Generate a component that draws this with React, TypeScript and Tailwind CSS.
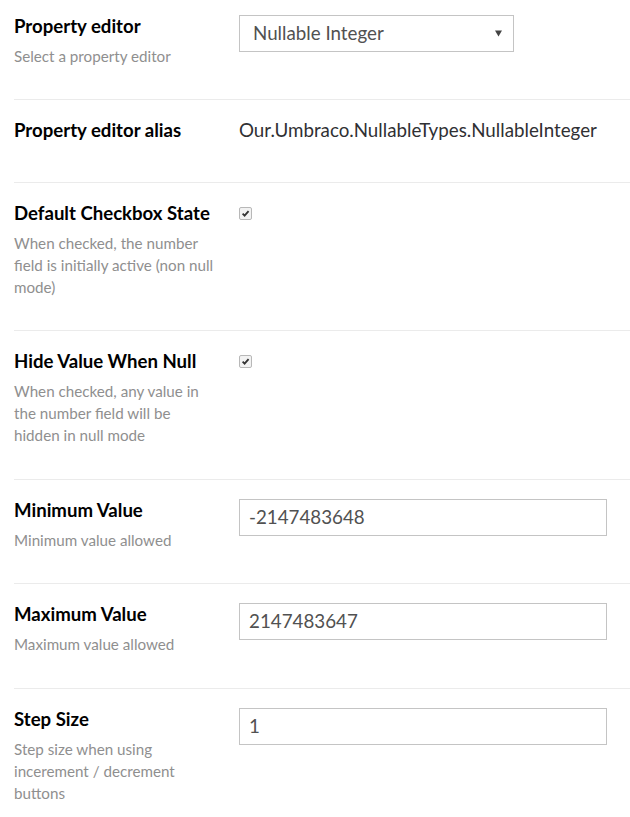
import React from 'react';

type Row = {
  label: string;
  desc?: string;
  control: React.ReactNode;
  pb: string;
};

function Check() {
  return (
    <span className="mt-[6px] flex h-[13px] w-[13px] items-center justify-center rounded-[2px] border border-[#b8b8b8] bg-[#f2f2f2]">
      <svg viewBox="0 0 10 10" className="h-[9px] w-[9px]">
        <path d="M1.8 5.2 L4 7.4 L8.4 2.4" fill="none" stroke="#333" strokeWidth="2" />
      </svg>
    </span>
  );
}

function TextInput({ value }: { value: string }) {
  return (
    <div className="mt-[1px] flex h-[37px] w-[368px] items-center border border-[#c4c4c4] px-[9px] text-[18.75px] text-[#515151]">
      {value}
    </div>
  );
}

export default function App() {
  const rows: Row[] = [
    {
      label: 'Property editor',
      desc: 'Select a property editor',
      pb: 'pb-[32px]',
      control: (
        <div className="mt-[1px] flex h-[37px] w-[275px] items-center justify-between border border-[#c4c4c4] pl-[13px] pr-[11px] text-[18.75px] text-[#515151]">
          <span>Nullable Integer</span>
          <svg viewBox="0 0 8 7" className="h-[7px] w-[7px]">
            <path d="M0 0 H8 L4 7 Z" fill="#444" />
          </svg>
        </div>
      ),
    },
    {
      label: 'Property editor alias',
      pb: 'pb-[40px]',
      control: <div className="text-[18.75px] leading-[24px] text-[#303033]">Our.Umbraco.NullableTypes.NullableInteger</div>,
    },
    {
      label: 'Default Checkbox State',
      desc: 'When checked, the number field is initially active (non null mode)',
      pb: 'pb-[32px]',
      control: <Check />,
    },
    {
      label: 'Hide Value When Null',
      desc: 'When checked, any value in the number field will be hidden in null mode',
      pb: 'pb-[33px]',
      control: <Check />,
    },
    { label: 'Minimum Value', desc: 'Minimum value allowed', pb: 'pb-[32px]', control: <TextInput value="-2147483648" /> },
    { label: 'Maximum Value', desc: 'Maximum value allowed', pb: 'pb-[33px]', control: <TextInput value="2147483647" /> },
    {
      label: 'Step Size',
      desc: 'Step size when using incerement / decrement buttons',
      pb: 'pb-[32px]',
      control: <TextInput value="1" />,
    },
  ];

  return (
    <div className="min-h-[817px] w-[630px] bg-white pl-[14px] font-['Lato',sans-serif]">
      {rows.map((r, i) => (
        <div
          key={i}
          className={`flex border-[#ebebeb] ${i < rows.length - 1 ? 'border-b' : ''} ${
            i === 0 ? 'pt-[14px]' : 'pt-[18px]'
          } ${r.pb}`}
        >
          <div className="w-[225px] shrink-0 pr-[22px]">
            <div className="text-[18.6px] font-bold leading-[24px] text-[#000]">{r.label}</div>
            {r.desc && (
              <div className="mt-[7px] text-[15.2px] leading-[22px] text-[#8f8f8f]">{r.desc}</div>
            )}
          </div>
          <div className="flex items-start">{r.control}</div>
        </div>
      ))}
    </div>
  );
}
